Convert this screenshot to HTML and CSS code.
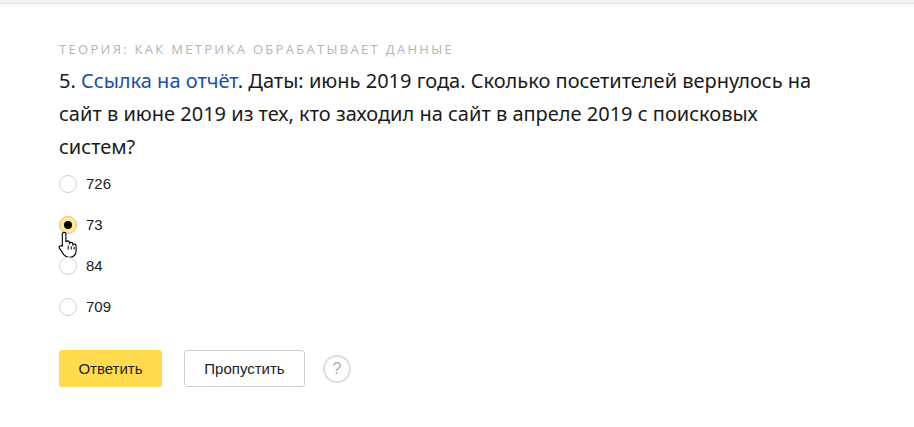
FILE: index.html
```html
<!DOCTYPE html>
<html lang="ru">

<head>
    <meta charset="UTF-8">
    <meta name="viewport" content="width=device-width, initial-scale=1.0">
    <title>Вопрос 5</title>
    <link rel="stylesheet" href="styles.css">
</head>

<body>
    <!-- верхняя полоса -->
    <div class="topbar"></div>

    <div class="quiz">
        <div class="quiz-category">Теория: как Метрика обрабатывает данные</div>
        <div class="quiz-question">5. <a href="javascript:;" class="quiz-link">Ссылка на отчёт</a>. Даты: июнь 2019 года. Сколько посетителей вернулось на сайт в июне 2019 из тех, кто заходил на сайт в апреле 2019 с поисковых<br>систем?</div>

        <!-- варианты ответа -->
        <ul class="options">
            <li class="option"><span class="radio"></span><span class="option-text">726</span></li>
            <li class="option option-checked">
                <span class="radio"></span><span class="option-text">73</span>
                <!-- курсор -->
                <svg class="cursor" width="20" height="28" viewBox="0 0 18 24">
                    <path d="M5.5 1.5c.9 0 1.6.7 1.6 1.6v7.1c.3-.6.9-1 1.6-1 .9 0 1.6.7 1.6 1.6v.5c.3-.5.8-.8 1.5-.8.9 0 1.6.7 1.6 1.6v.6c.3-.4.8-.6 1.3-.6.9 0 1.6.7 1.6 1.6v4.6c0 3.3-2.4 5.6-5.6 5.6H9.6c-1.9 0-3.3-.8-4.4-2.3L1.4 15.9c-.5-.7-.4-1.6.3-2.1.7-.5 1.6-.4 2.1.2l.1.2V3.1c0-.9.7-1.6 1.6-1.6z" fill="#fff" stroke="#000" stroke-width="1"/>
                    <path d="M9.2 13.5v3.5M11.9 14v3M14.5 14.5v2.5" stroke="#000" stroke-width="0.9" fill="none"/>
                </svg>
            </li>
            <li class="option"><span class="radio"></span><span class="option-text">84</span></li>
            <li class="option"><span class="radio"></span><span class="option-text">709</span></li>
        </ul>

        <div class="actions">
            <a href="javascript:;" class="btn btn-answer">Ответить</a>
            <a href="javascript:;" class="btn btn-skip">Пропустить</a>
            <a href="javascript:;" class="help">?</a>
        </div>
    </div>
</body>

</html>
```

FILE: styles.css
```css
* {
    margin: 0;
    padding: 0;
    list-style-type: none;
    box-sizing: border-box;
}

body {
    background-color: #fff;
    font-family: "Liberation Sans", Arial, sans-serif;
    color: #000;
}

/* верхняя полоса с тенью */
.topbar {
    height: 4px;
    background-color: #f2f2f2;
    border-bottom: 1px solid #e2e2e2;
    box-shadow: 0 1px 6px rgba(0, 0, 0, 0.08);
}

.quiz {
    padding: 37px 0 0 59px;
}

/* заголовок раздела */
.quiz-category {
    font-family: "Open Sans", sans-serif;
    font-size: 13px;
    line-height: 16px;
    letter-spacing: 2.3px;
    text-transform: uppercase;
    color: #b5b5b5;
}

/* текст вопроса */
.quiz-question {
    width: 800px;
    margin-top: 7px;
    font-family: "Noto Sans", sans-serif;
    font-size: 20px;
    line-height: 33px;
    color: #1a1a1a;
}

.quiz-link {
    color: #1a4fa8;
    text-decoration: none;
}

/* варианты */
.options {
    margin-top: 0;
}

.option {
    position: relative;
    display: flex;
    align-items: center;
    height: 41px;
}

.radio {
    width: 18px;
    height: 18px;
    border: 1px solid #d0d0d0;
    border-radius: 50%;
    background-color: #fff;
    display: flex;
    align-items: center;
    justify-content: center;
}

.option-checked .radio {
    background-color: #fde89c;
    border-color: #e8c25a;
}

.option-checked .radio::after {
    content: "";
    width: 8px;
    height: 8px;
    border-radius: 50%;
    background-color: #000;
}

.option-text {
    margin-left: 9px;
    font-size: 15px;
    color: #222;
}

/* курсор поверх варианта */
.cursor {
    position: absolute;
    left: -1px;
    top: 26px;
}

/* кнопки */
.actions {
    display: flex;
    align-items: center;
    margin-top: 23px;
}

.btn {
    display: flex;
    align-items: center;
    justify-content: center;
    height: 37px;
    border-radius: 3px;
    font-size: 15px;
    color: #222;
    text-decoration: none;
}

.btn-answer {
    width: 103px;
    background-color: #ffdb4d;
}

.btn-skip {
    width: 121px;
    margin-left: 22px;
    border: 1px solid #cfcfcf;
}

.help {
    display: flex;
    align-items: center;
    justify-content: center;
    width: 28px;
    height: 28px;
    margin-left: 18px;
    border: 2px solid #ddd;
    border-radius: 50%;
    font-size: 16px;
    color: #aaa;
    text-decoration: none;
}
```
